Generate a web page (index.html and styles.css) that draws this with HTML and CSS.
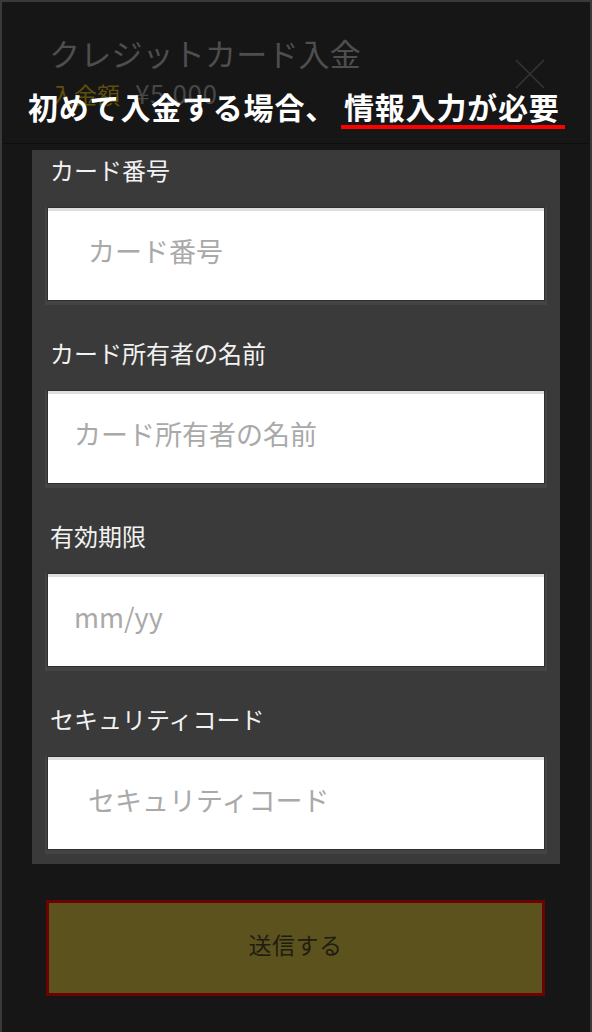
FILE: index.html
```html
<!DOCTYPE html>
<html lang="ja">
<head>
<meta charset="utf-8">
<title>クレジットカード入金</title>
<link rel="stylesheet" href="styles.css">
</head>
<body>
<div class="modal">
  <header class="header">
    <h1 class="title">クレジットカード入金</h1>
    <div class="amount"><span class="amount-label">入金額</span><span class="amount-value">¥5,000</span></div>
    <svg class="close" width="30" height="30" viewBox="0 0 30 30" aria-hidden="true">
      <path d="M1 1 L29 29 M29 1 L1 29" stroke="#343434" stroke-width="1.6" fill="none"/>
    </svg>
    <p class="caption">初めて入金する場合、<span class="mark">情報入力が必要</span></p>
  </header>
  <form class="panel">
    <div class="field">
      <label class="label">カード番号</label>
      <input class="input wide" type="text" placeholder="カード番号">
    </div>
    <div class="field">
      <label class="label">カード所有者の名前</label>
      <input class="input" type="text" placeholder="カード所有者の名前">
    </div>
    <div class="field">
      <label class="label">有効期限</label>
      <input class="input" type="text" placeholder="mm/yy">
    </div>
    <div class="field">
      <label class="label">セキュリティコード</label>
      <input class="input wide" type="text" placeholder="セキュリティコード">
    </div>
  </form>
  <button class="submit" type="button">送信する</button>
</div>
</body>
</html>
```

FILE: styles.css
```css
* { box-sizing: border-box; }
html, body {
  margin: 0;
  padding: 0;
  background: #151515;
}
body {
  font-family: "Noto Sans CJK JP", "Noto Sans", sans-serif;
}
.modal {
  width: 592px;
  min-height: 1032px;
  border: 2px solid #3a3a3a;
  border-bottom: none;
  background: #161616;
}
.header {
  position: relative;
  height: 142px;
  padding: 29px 0 0 47px;
  border-bottom: 1px solid #0f0f0f;
}
.title {
  margin: 0;
  font-size: 31px;
  line-height: 44px;
  font-weight: 400;
  color: #4e4e4e;
  letter-spacing: 0.2px;
}
.amount {
  display: flex;
  align-items: baseline;
  gap: 15px;
  font-size: 23px;
  line-height: 36px;
  padding-left: 2px;
}
.amount-label { color: #5f4f0c; }
.amount-value { color: #474747; font-size: 26px; letter-spacing: 0.5px; }
.close {
  position: absolute;
  right: 45px;
  top: 57px;
}
.caption {
  position: absolute;
  left: 26px;
  top: 84px;
  margin: 0;
  font-size: 30px;
  line-height: 40px;
  font-weight: 700;
  color: #ffffff;
  letter-spacing: 0.8px;
  white-space: nowrap;
}
.mark {
  display: inline-block;
  margin-left: 5px;
  padding: 0 5px 0 3px;
  border-bottom: 4px solid #ff0000;
  line-height: 38px;
}
.panel {
  margin: 6px 0 0 30px;
  width: 528px;
  background: #3a3a3a;
  padding: 4px 16px 15px;
  display: flex;
  flex-direction: column;
  gap: 37px;
}
.field {
  display: flex;
  flex-direction: column;
  gap: 22px;
}
.label {
  padding-left: 2px;
  font-size: 24px;
  line-height: 32px;
  color: #f2f2f2;
}
.input {
  display: block;
  width: 100%;
  height: 92px;
  border: none;
  border-top: 3px solid #dedede;
  background: #ffffff;
  padding: 0 0 10px 26px;
  font-family: "Noto Sans CJK JP", "Noto Sans", sans-serif;
  font-size: 27px;
  color: #333;
  outline: none;
  box-shadow: 0 0 0 1px #2f2f2f, 0 2px 0 3px #444444;
}
.input.wide { padding-left: 40px; }
.input::placeholder { color: #a9a9a9; }
.submit {
  display: block;
  margin: 36px 0 0 44px;
  width: 499px;
  height: 96px;
  padding: 0 0 8px;
  background: #5c521d;
  border: 3px solid #6c0300;
  font-family: "Noto Sans CJK JP", "Noto Sans", sans-serif;
  font-size: 23px;
  color: #1f1d12;
  letter-spacing: 0.5px;
}
```
